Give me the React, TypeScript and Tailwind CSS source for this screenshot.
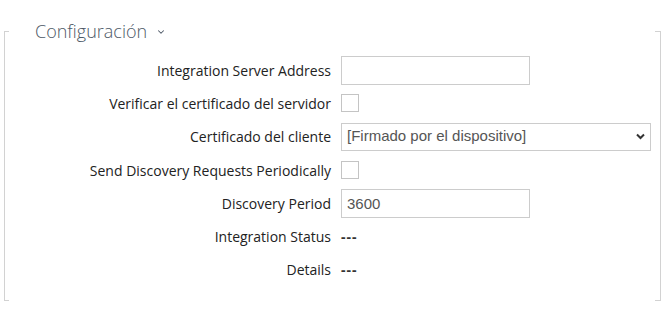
import { ChevronDown } from "lucide-react";

const labelFont = { fontFamily: '"Open Sans", "Noto Sans", sans-serif' };

function Row({ label, children }: { label: string; children: React.ReactNode }) {
  return (
    <div className="flex items-center h-[33.3px]">
      <div className="w-[326px] text-right text-[14px] text-[#222]" style={labelFont}>
        {label}
      </div>
      <div className="ml-[10px] flex items-center">{children}</div>
    </div>
  );
}

function Checkbox() {
  return <div className="w-[18px] h-[18px] border border-[#c4c4c4] bg-white" />;
}

function Dashes() {
  return (
    <span className="text-[14px] font-bold text-[#333] tracking-[1px]" style={labelFont}>
      ---
    </span>
  );
}

export default function App() {
  return (
    <div className="w-[671px] h-[321px] bg-white pt-[31px] pl-[4px] font-['Liberation_Sans',Arial,sans-serif]">
      <div className="w-[657px] h-[270px] border-x border-[#d2d2d2] flex flex-col">
        {/* top edge with legend */}
        <div className="flex items-center h-0">
          <div className="w-[4px] h-px bg-[#d2d2d2]" />
          <div
            className="ml-[26px] flex-1 flex items-center gap-[9px] text-[18px] font-light text-[#4d5866]"
            style={labelFont}
          >
            Configuración
            <ChevronDown className="w-[10px] h-[10px] mt-[2px]" strokeWidth={2.5} />
          </div>
          <div className="w-[5px] h-px bg-[#d2d2d2]" />
        </div>

        <div className="pt-[22.5px] flex-1">
          <Row label="Integration Server Address">
            <input className="w-[189px] h-[29px] border border-[#cccccc] outline-none px-[5px] text-[15px] text-[#555]" />
          </Row>
          <Row label="Verificar el certificado del servidor">
            <Checkbox />
          </Row>
          <Row label="Certificado del cliente">
            <div className="relative">
              <select className="appearance-none w-[310px] h-[28px] border border-[#cccccc] bg-white pl-[5px] text-[15px] text-[#555] outline-none">
                <option>[Firmado por el dispositivo]</option>
              </select>
              <svg
                className="absolute right-[6px] top-[10px] w-[9px] h-[7px] pointer-events-none"
                viewBox="0 0 9 7"
              >
                <path d="M1 1.5 L4.5 5 L8 1.5" stroke="#333" strokeWidth="2" fill="none" />
              </svg>
            </div>
          </Row>
          <Row label="Send Discovery Requests Periodically">
            <Checkbox />
          </Row>
          <Row label="Discovery Period">
            <input
              defaultValue="3600"
              className="w-[189px] h-[29px] border border-[#cccccc] outline-none px-[5px] text-[15px] text-[#555]"
            />
          </Row>
          <Row label="Integration Status">
            <Dashes />
          </Row>
          <Row label="Details">
            <Dashes />
          </Row>
        </div>

        {/* bottom edge ticks */}
        <div className="flex justify-between h-px">
          <div className="w-[4px] h-px bg-[#d2d2d2]" />
          <div className="w-[5px] h-px bg-[#d2d2d2]" />
        </div>
      </div>
    </div>
  );
}
